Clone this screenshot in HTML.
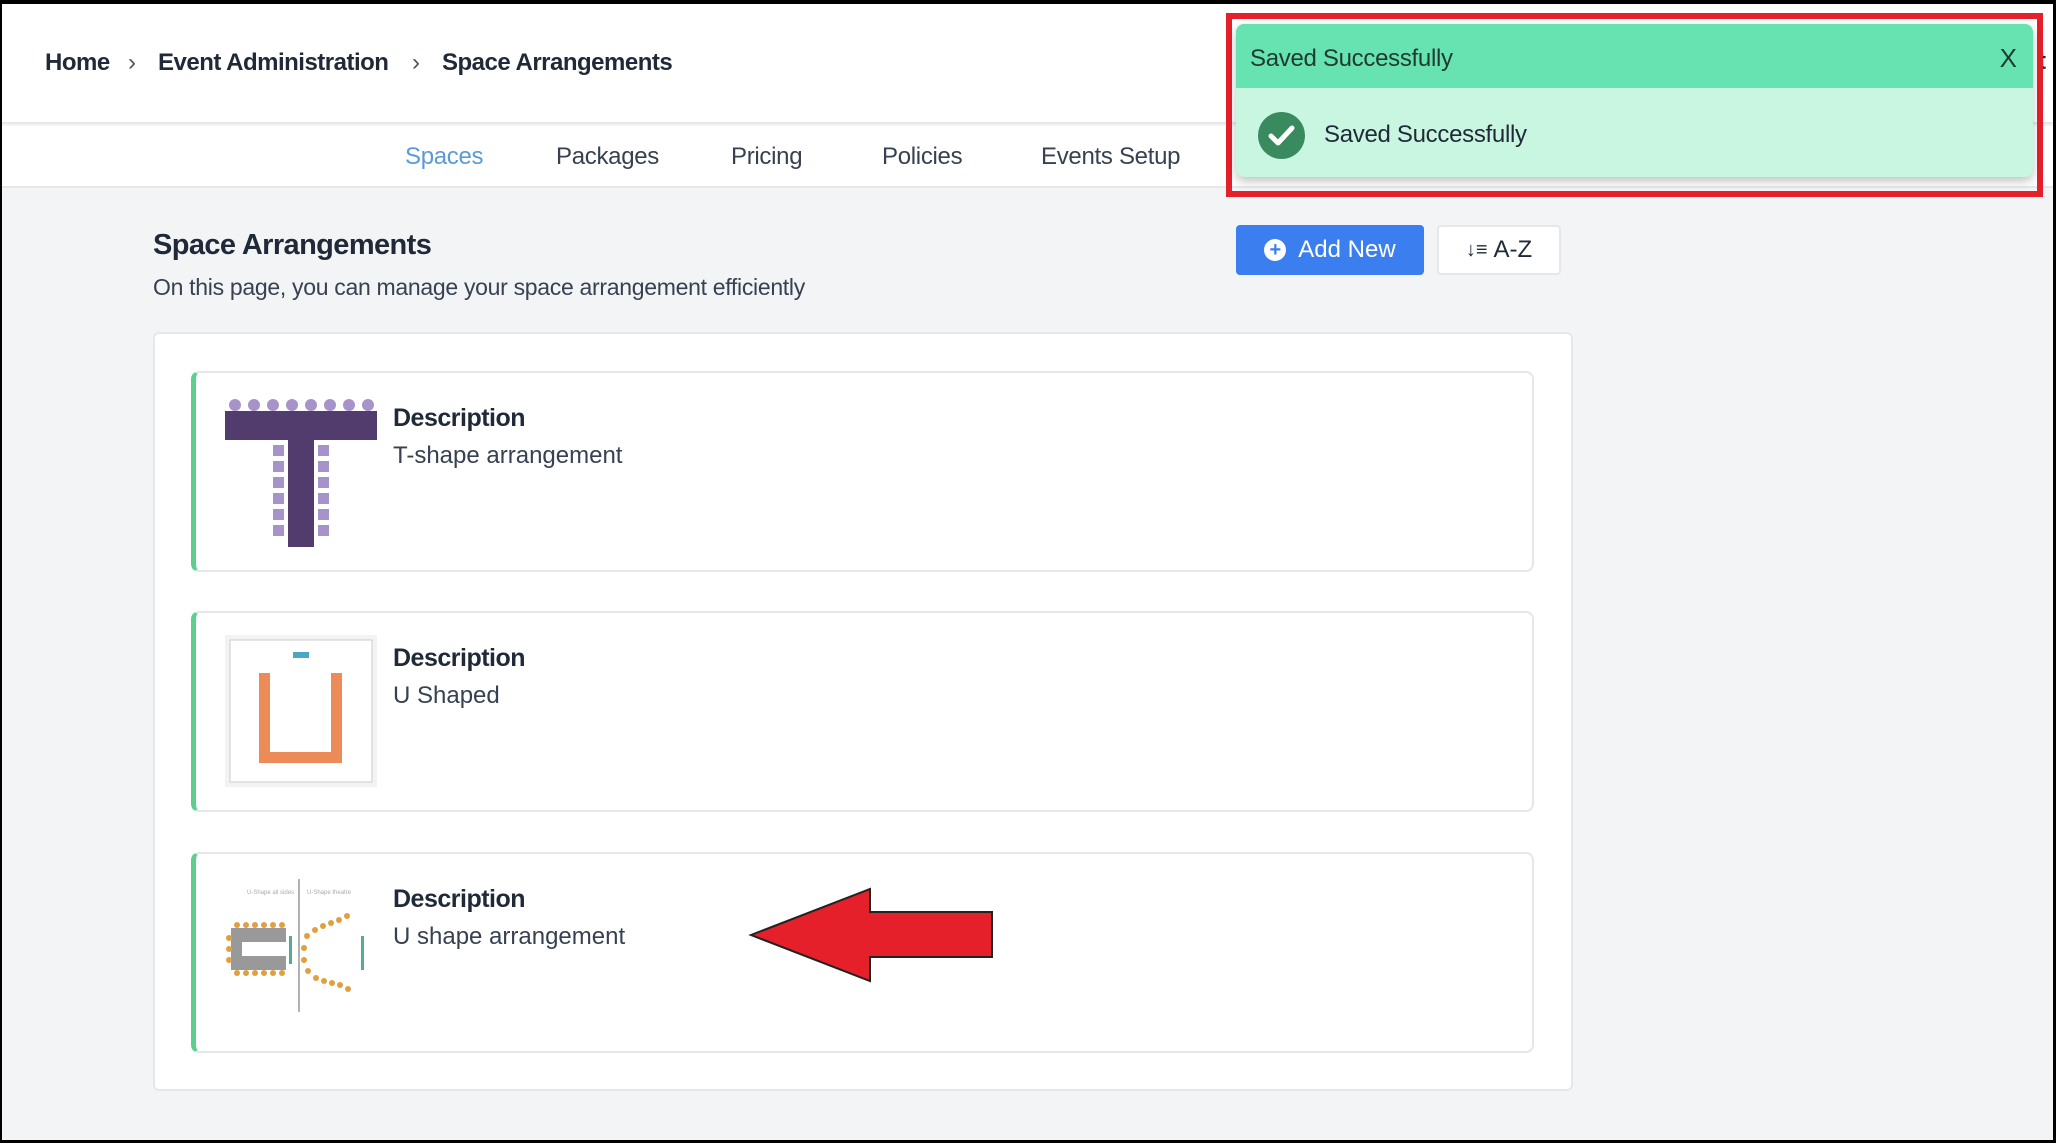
<!DOCTYPE html>
<html><head><meta charset="utf-8"><style>
*{box-sizing:border-box;margin:0;padding:0}
body{width:2056px;height:1143px;background:#000;font-family:"Liberation Sans",sans-serif;color:#1f2937;position:relative;overflow:hidden}
#page{position:absolute;left:2px;top:4px;width:2051px;height:1136px;background:#f3f4f6;overflow:hidden}
.hdr{position:absolute;left:0;top:0;width:100%;height:120px;background:#fff;border-bottom:2px solid #e5e7eb}
.tabs{position:absolute;left:0;top:122px;width:100%;height:62px;background:#fff;border-bottom:2px solid #e5e7eb}
.abs{position:absolute;white-space:nowrap}
.crumb{top:45px;font-size:24px;font-weight:bold;color:#1f2937;letter-spacing:-0.5px}
.tab{top:139px;font-size:24px;color:#374151;letter-spacing:-0.3px}
.btn{position:absolute;top:221px;height:50px;border-radius:4px;font-size:24px;display:flex;align-items:center;justify-content:center}
.panel{position:absolute;left:151px;top:328px;width:1420px;height:759px;background:#fff;border:2px solid #e5e7eb;border-radius:6px}
.card{position:absolute;left:189px;width:1343px;height:201px;background:#fff;border:2px solid #e5e7eb;border-left:5px solid #5ccf8f;border-radius:8px}
.d1{position:absolute;left:197px;top:31px;font-size:25px;font-weight:bold;color:#1f2937;letter-spacing:-0.5px}
.d2{position:absolute;left:197px;top:69px;font-size:24px;color:#374151}
.img{position:absolute;left:29px;top:22px;width:152px;height:152px}
</style></head><body>
<div id="page">
<div class="hdr"></div>
<div class="abs crumb" style="left:43px">Home</div>
<div class="abs crumb" style="left:126px;font-weight:normal;color:#4b5563">›</div>
<div class="abs crumb" style="left:156px">Event Administration</div>
<div class="abs crumb" style="left:410px;font-weight:normal;color:#4b5563">›</div>
<div class="abs crumb" style="left:440px">Space Arrangements</div>
<div class="tabs"></div>
<div class="abs tab" style="left:403px;color:#5b9bd5">Spaces</div>
<div class="abs tab" style="left:554px">Packages</div>
<div class="abs tab" style="left:729px">Pricing</div>
<div class="abs tab" style="left:880px">Policies</div>
<div class="abs tab" style="left:1039px">Events Setup</div>
<div class="abs" style="left:2036px;top:44px;font-size:24px;font-weight:bold">t</div>

<div class="abs" style="left:151px;top:225px;font-size:29px;font-weight:bold;letter-spacing:-0.6px">Space Arrangements</div>
<div class="abs" style="left:151px;top:270px;font-size:23px;color:#374151;letter-spacing:-0.3px">On this page, you can manage your space arrangement efficiently</div>

<div class="btn" style="left:1234px;width:188px;background:#3b7ef0;color:#fff"><span style="display:inline-block;width:22px;height:22px;border-radius:50%;background:#fff;color:#3b7ef0;font-size:20px;line-height:22px;text-align:center;font-weight:bold;margin-right:12px">+</span>Add New</div>
<div class="btn" style="left:1435px;width:124px;background:#fff;border:2px solid #e5e7eb;color:#1f2937"><span style="font-size:20px;margin-right:6px">↓≡</span>A-Z</div>

<div class="panel"></div>

<div class="card" style="top:367px">
<svg class="img" viewBox="0 0 152 152">
<g fill="#a793c9">
<circle cx="10" cy="10" r="6"/><circle cx="29" cy="10" r="6"/><circle cx="48" cy="10" r="6"/><circle cx="67" cy="10" r="6"/><circle cx="86" cy="10" r="6"/><circle cx="105" cy="10" r="6"/><circle cx="124" cy="10" r="6"/><circle cx="143" cy="10" r="6"/>
</g>
<rect x="0" y="16" width="152" height="29" fill="#523c6e"/>
<rect x="63" y="45" width="26" height="107" fill="#523c6e"/>
<g fill="#a793c9">
<rect x="48" y="50" width="11" height="11"/><rect x="48" y="66" width="11" height="11"/><rect x="48" y="82" width="11" height="11"/><rect x="48" y="98" width="11" height="11"/><rect x="48" y="114" width="11" height="11"/><rect x="48" y="130" width="11" height="11"/>
<rect x="93" y="50" width="11" height="11"/><rect x="93" y="66" width="11" height="11"/><rect x="93" y="82" width="11" height="11"/><rect x="93" y="98" width="11" height="11"/><rect x="93" y="114" width="11" height="11"/><rect x="93" y="130" width="11" height="11"/>
</g></svg>
<div class="d1">Description</div><div class="d2">T-shape arrangement</div>
</div>

<div class="card" style="top:607px">
<svg class="img" viewBox="0 0 152 152">
<rect x="0" y="0" width="152" height="152" fill="#f3f3f3"/>
<rect x="5" y="5" width="142" height="142" fill="#fff" stroke="#ccc"/>
<rect x="68" y="17" width="16" height="6" fill="#4aa8c0"/>
<rect x="34" y="38" width="11" height="90" fill="#ec8b58"/>
<rect x="106" y="38" width="11" height="90" fill="#ec8b58"/>
<rect x="34" y="117" width="83" height="11" fill="#ec8b58"/>
</svg>
<div class="d1">Description</div><div class="d2">U Shaped</div>
</div>

<div class="card" style="top:848px">
<svg class="img" viewBox="0 0 152 152">
<line x1="74" y1="3" x2="74" y2="136" stroke="#999" stroke-width="1.5"/>
<text x="22" y="18" font-size="6" fill="#aaa" font-family="Liberation Sans">U-Shape all sides</text>
<text x="82" y="18" font-size="6" fill="#aaa" font-family="Liberation Sans">U-Shape theatre</text>
<rect x="6" y="52" width="55" height="14" fill="#999"/>
<rect x="6" y="80" width="55" height="14" fill="#999"/>
<rect x="6" y="52" width="11" height="42" fill="#999"/>
<g fill="#e0a040"><circle cx="12" cy="49" r="3"/><circle cx="21" cy="49" r="3"/><circle cx="30" cy="49" r="3"/><circle cx="39" cy="49" r="3"/><circle cx="48" cy="49" r="3"/><circle cx="57" cy="49" r="3"/>
<circle cx="12" cy="97" r="3"/><circle cx="21" cy="97" r="3"/><circle cx="30" cy="97" r="3"/><circle cx="39" cy="97" r="3"/><circle cx="48" cy="97" r="3"/><circle cx="57" cy="97" r="3"/>
<circle cx="4" cy="62" r="3"/><circle cx="4" cy="73" r="3"/><circle cx="4" cy="84" r="3"/>
<circle cx="82" cy="60" r="3"/><circle cx="90" cy="54" r="3"/><circle cx="98" cy="50" r="3"/><circle cx="106" cy="47" r="3"/><circle cx="114" cy="44" r="3"/><circle cx="122" cy="40" r="3"/>
<circle cx="79" cy="72" r="3"/><circle cx="79" cy="84" r="3"/><circle cx="83" cy="95" r="3"/><circle cx="91" cy="102" r="3"/><circle cx="99" cy="105" r="3"/><circle cx="107" cy="107" r="3"/><circle cx="115" cy="109" r="3"/><circle cx="123" cy="113" r="3"/></g>
<rect x="64" y="60" width="3" height="28" fill="#5a9"/>
<rect x="136" y="60" width="3" height="34" fill="#5a9"/>
</svg>
<div class="d1">Description</div><div class="d2">U shape arrangement</div>
</div>

<svg class="abs" style="left:0;top:0" width="2051" height="1136">
<polygon points="749,931 868,885 868,908 990,908 990,953 868,953 868,977" fill="#e5202a" stroke="#222" stroke-width="2"/>
</svg>

<div class="abs" style="left:1224px;top:9px;width:817px;height:184px;border:6px solid #e5202a"></div>
<div class="abs" style="left:1234px;top:20px;width:797px;height:153px;border-radius:8px;overflow:hidden;box-shadow:0 4px 10px rgba(0,0,0,.25);background:#c9f6e0">
<div style="height:64px;background:#66e3b0;position:relative">
<div style="position:absolute;left:14px;top:21px;font-size:24px;color:#1f3a30;letter-spacing:-0.3px">Saved Successfully</div>
<div style="position:absolute;right:16px;top:19px;font-size:26px;color:#1f3a30">X</div>
</div>
<div style="position:absolute;left:22px;top:88px;width:47px;height:47px;border-radius:50%;background:#3a8a60"><svg width="47" height="47"><path d="M13 24 L20 31 L34 16" fill="none" stroke="#fff" stroke-width="5" stroke-linecap="round" stroke-linejoin="round"/></svg></div>
<div style="position:absolute;left:88px;top:97px;font-size:24px;color:#1f2937;letter-spacing:-0.3px">Saved Successfully</div>
</div>
</div>
</body></html>
